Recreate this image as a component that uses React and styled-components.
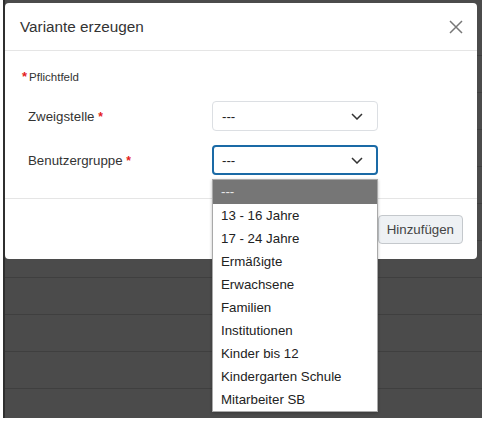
import React from 'react'
import styled, { createGlobalStyle } from 'styled-components'

const Global = createGlobalStyle`
  html, body {
    margin: 0;
    padding: 0;
    background: #fff;
  }
  body {
    font-family: "Liberation Sans", Arial, sans-serif;
  }
`;

const Page = styled.div`
  width: 484px;
  height: 424px;
  background: #fff;
  overflow: hidden;
`;

const Backdrop = styled.div`
  position: relative;
  margin-left: 3px;
  width: 479px;
  height: 418px;
  box-sizing: border-box;
  background: #4b4b4b;
  border-left: 2px solid #2f2f2f;
  padding-top: 19px;
`;

const Row = styled.div`
  height: 36px;
  border-bottom: 1px solid #3f3f3f;
`;

const Modal = styled.div`
  position: absolute;
  left: 0;
  top: 3px;
  width: 472px;
  height: 256px;
  background: #fff;
  border-radius: 4px;
  display: flex;
  flex-direction: column;
  color: #333;
`;

const Header = styled.div`
  height: 47px;
  padding: 0 14px 0 15px;
  display: flex;
  align-items: center;
  justify-content: space-between;
  border-bottom: 1px solid #e5e5e5;
`;

const Title = styled.div`
  font-size: 15.3px;
  color: #333;
`;

const Close = styled.button`
  border: 0;
  background: none;
  padding: 0;
  width: 14px;
  height: 14px;
  display: flex;
`;

const Body = styled.div`
  padding: 19px 15px 23px;
  display: flex;
  flex-direction: column;
`;

const Required = styled.div`
  font-size: 11.5px;
  line-height: 14px;
  margin-left: 2px;
  margin-bottom: 17px;
  color: #333;
`;

const Star = styled.span`
  color: #e41b1b;
  font-weight: bold;
  margin-right: ${p => p.$gap || 0}px;
  font-size: ${p => p.$size || 12}px;
`;

const Field = styled.div`
  display: grid;
  grid-template-columns: 192px 166px;
  align-items: center;
  margin-bottom: ${p => p.$last ? 0 : 14}px;
`;

const Label = styled.label`
  padding-left: 8px;
  font-size: 13.3px;
  color: #333;
`;

const SelectWrap = styled.div`
  position: relative;
`;

const Select = styled.div`
  height: 30px;
  box-sizing: border-box;
  border: ${p => p.$focus ? '2px solid #1a6aa6' : '1px solid #dcdfe3'};
  border-radius: 4px;
  padding: 0 ${p => p.$focus ? 13 : 14}px 0 ${p => p.$focus ? 8 : 9}px;
  display: flex;
  align-items: center;
  justify-content: space-between;
  font-size: 13.3px;
  color: #222;
  background: #fff;
`;

const Menu = styled.ul`
  position: absolute;
  top: calc(100% + 4px);
  left: 0;
  width: 166px;
  box-sizing: border-box;
  margin: 0;
  padding: 0;
  list-style: none;
  background: #fff;
  border: 1px solid #a9a9a9;
  box-shadow: 0 1px 3px rgba(0, 0, 0, 0.25);
  z-index: 2;
`;

const Option = styled.li`
  height: ${p => p.$active ? 24 : 23}px;
  line-height: ${p => p.$active ? 24 : 23}px;
  padding-left: 8px;
  font-size: 13.3px;
  color: ${p => p.$active ? '#e8e8e8' : '#222'};
  background: ${p => p.$active ? '#767676' : '#fff'};
  white-space: nowrap;
`;

const Footer = styled.div`
  border-top: 1px solid #e5e5e5;
  padding: 16px 14px 15px;
  display: flex;
  justify-content: flex-end;
`;

const Button = styled.button`
  height: 29px;
  padding: 0 8px;
  font-family: "Liberation Sans", Arial, sans-serif;
  font-size: 13.3px;
  color: #444;
  background: #eef1f4;
  border: 1px solid #c4c8cc;
  border-radius: 4px;
`;

const Chevron = () => (
  <svg width="12" height="7" viewBox="0 0 12 7">
    <polyline points="1,1 6,6 11,1" fill="none" stroke="#333" strokeWidth="1.5" />
  </svg>
);

const options = [
  '---',
  '13 - 16 Jahre',
  '17 - 24 Jahre',
  'Ermäßigte',
  'Erwachsene',
  'Familien',
  'Institutionen',
  'Kinder bis 12',
  'Kindergarten Schule',
  'Mitarbeiter SB',
];

export default function App() {
  return (
    <Page>
      <Global />
      <Backdrop>
        {Array.from({ length: 11 }).map((_, i) => <Row key={i} />)}
        <Modal>
          <Header>
            <Title>Variante erzeugen</Title>
            <Close aria-label="Schließen">
              <svg width="14" height="14" viewBox="0 0 14 14">
                <path d="M1 1 L13 13 M13 1 L1 13" stroke="#777" strokeWidth="1.5" />
              </svg>
            </Close>
          </Header>
          <Body>
            <Required><Star $gap={2} $size={13}>*</Star>Pflichtfeld</Required>
            <Field>
              <Label>Zweigstelle <Star>*</Star></Label>
              <SelectWrap>
                <Select>--- <Chevron /></Select>
              </SelectWrap>
            </Field>
            <Field $last>
              <Label>Benutzergruppe <Star>*</Star></Label>
              <SelectWrap>
                <Select $focus>--- <Chevron /></Select>
                <Menu>
                  {options.map((o, i) => (
                    <Option key={o} $active={i === 0}>{o}</Option>
                  ))}
                </Menu>
              </SelectWrap>
            </Field>
          </Body>
          <Footer>
            <Button>Hinzufügen</Button>
          </Footer>
        </Modal>
      </Backdrop>
    </Page>
  )
}
